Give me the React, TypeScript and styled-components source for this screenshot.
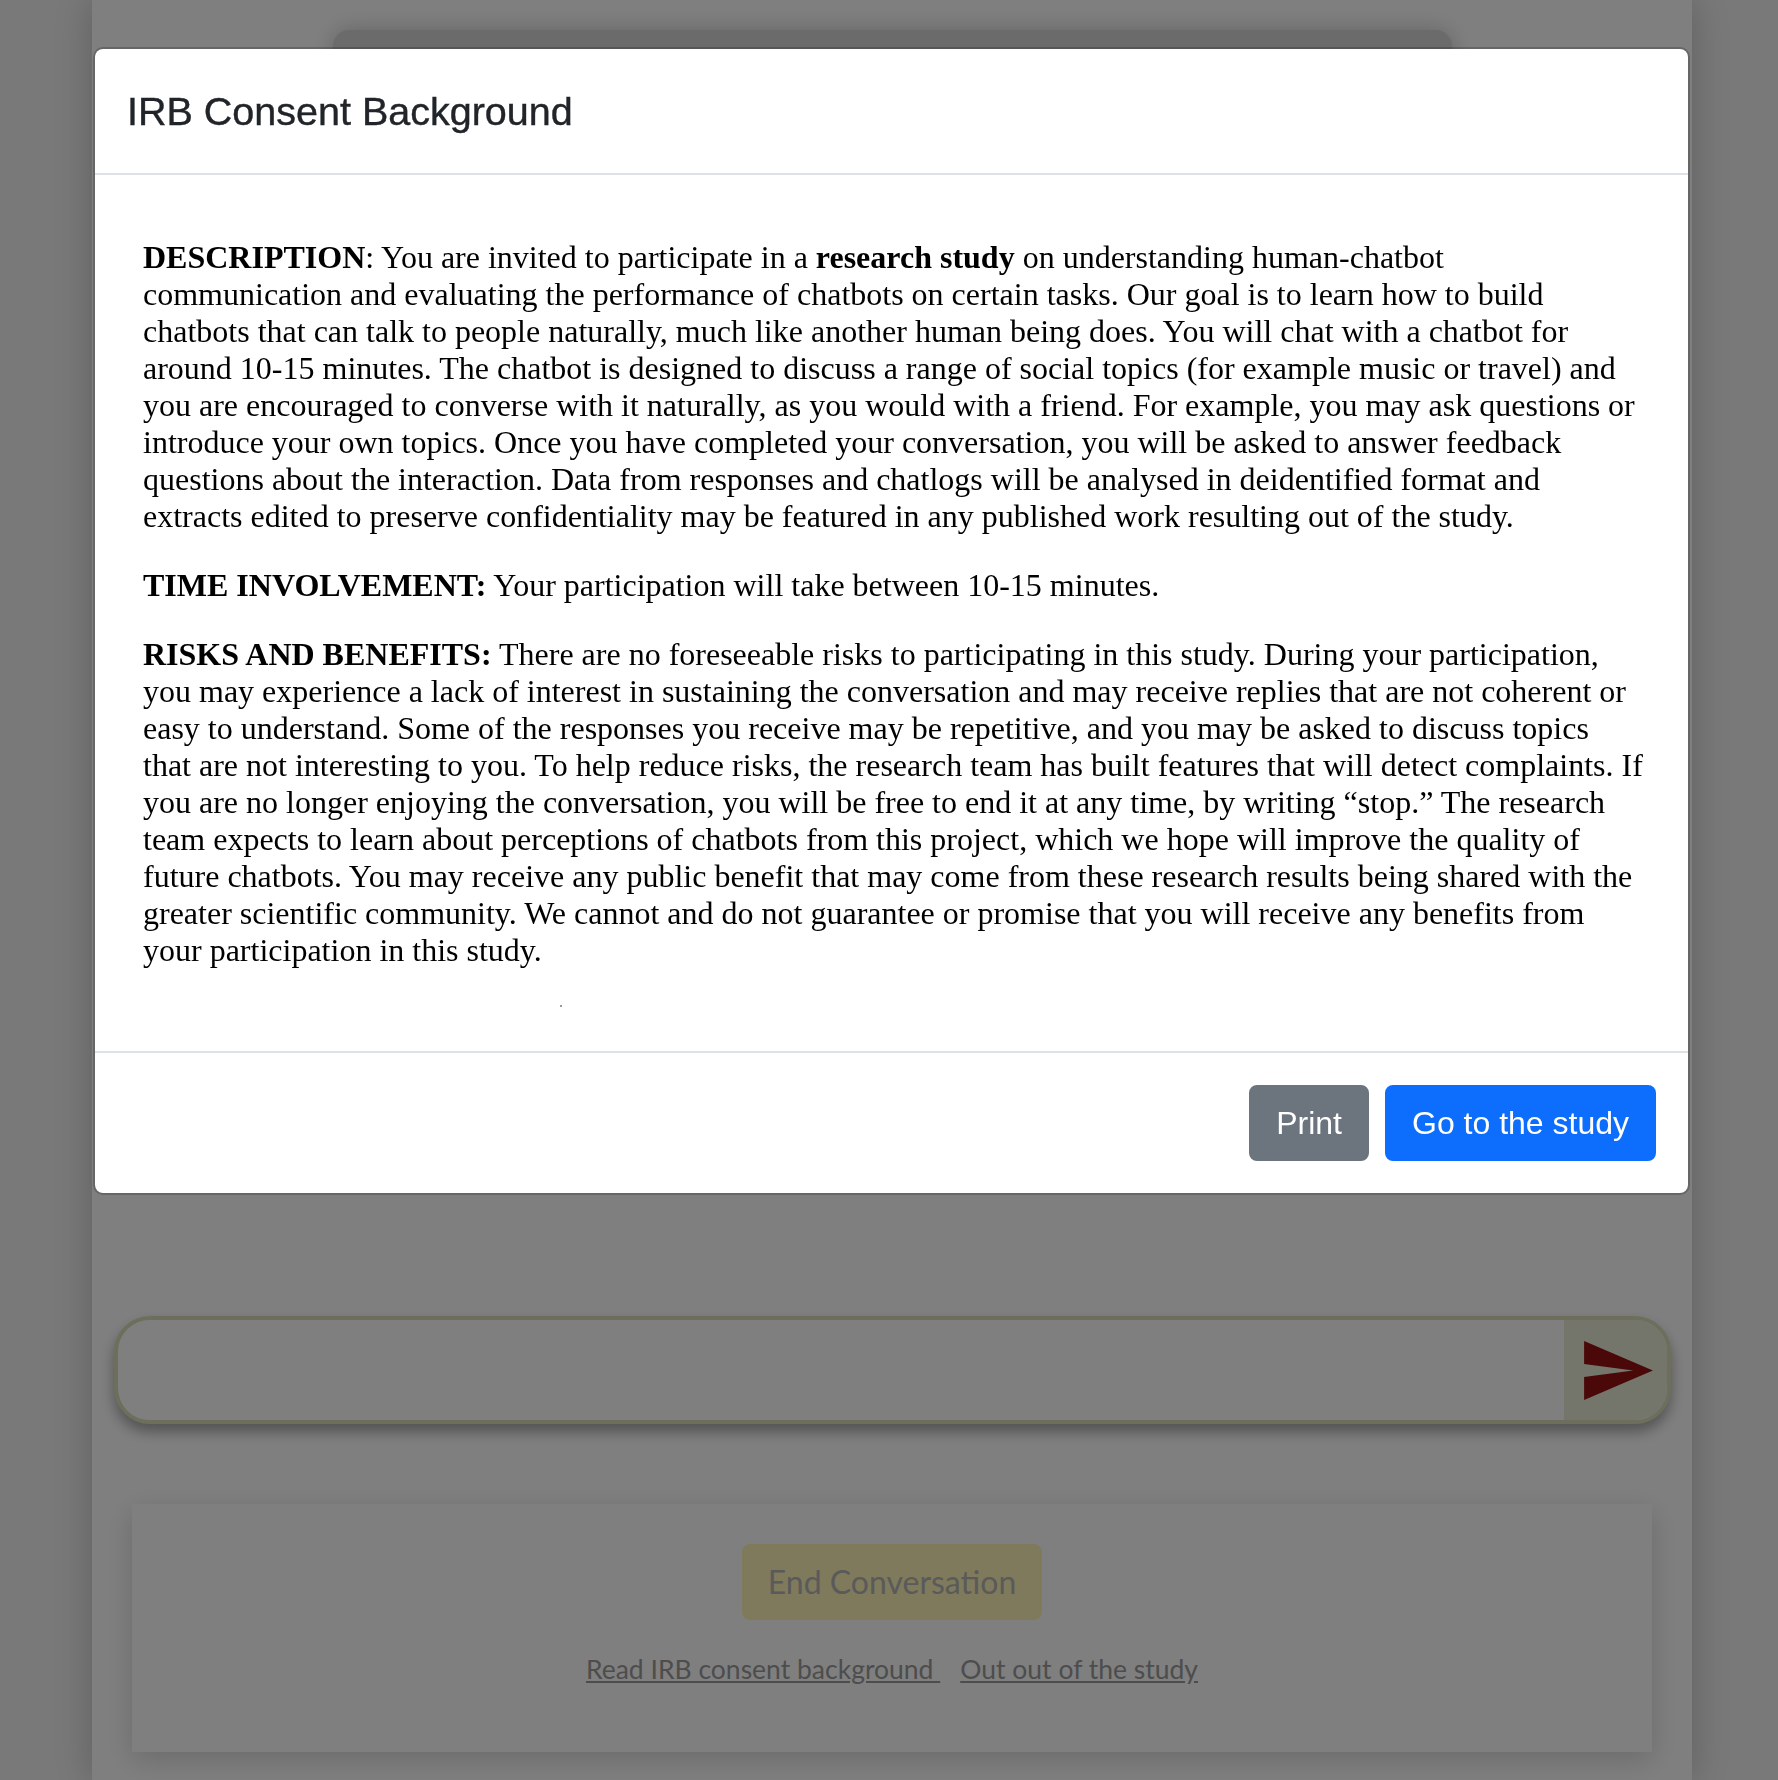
import React from "react";
import styled, { createGlobalStyle } from "styled-components";

const GlobalStyle = createGlobalStyle`
  * { box-sizing: border-box; }
  html, body { margin: 0; padding: 0; }
  body {
    background: #f2f2f2;
    overflow: hidden;
    font-family: "Lato", "Open Sans", sans-serif;
  }
`;

const Page = styled.div`
  height: 1780px;
  display: flex;
  padding-left: 92px;
`;

const Panel = styled.main`
  width: 1600px;
  height: 1780px;
  background: #ffffff;
  box-shadow: 0 0 34px rgba(0, 0, 0, 0.22);
  display: flex;
  flex-direction: column;
  align-items: center;
`;

const TopCard = styled.header`
  width: 1119px;
  height: 140px;
  margin-top: 30px;
  background: #d7d7d7;
  border-radius: 16px;
  box-shadow: 0 0 22px rgba(0, 0, 0, 0.22);
`;

const ChatLog = styled.section`
  height: 1146px;
  width: 100%;
`;

const InputBar = styled.form`
  width: 1557px;
  height: 108px;
  display: flex;
  border: 4px solid #dadfb9;
  border-radius: 36px;
  overflow: hidden;
  background: #ffffff;
  box-shadow: 0 8px 14px rgba(0, 0, 0, 0.35);
`;

const TextInput = styled.input`
  flex: 1;
  border: none;
  outline: none;
  background: transparent;
  font-family: "Lato", sans-serif;
  font-size: 32px;
  padding: 0 36px;
`;

const SendButton = styled.button`
  width: 103px;
  border: none;
  background: #e8ecd6;
  display: flex;
  align-items: center;
  padding: 0 0 0 20px;
  cursor: pointer;
`;

const ActionsCard = styled.section`
  width: 1520px;
  margin-top: 80px;
  background: #ffffff;
  box-shadow: 0 8px 26px rgba(0, 0, 0, 0.16);
  display: flex;
  flex-direction: column;
  align-items: center;
  padding: 40px 0 63px;
`;

const EndButton = styled.button`
  font-family: "Lato", sans-serif;
  font-size: 32px;
  line-height: 48px;
  padding: 12px 24px;
  border: 2px solid #fef4b8;
  border-radius: 8px;
  background: #fef4b8;
  color: #b4b4b4;
  margin-bottom: 30px;
  &:disabled {
    color: #b4b4b4;
  }
`;

const LinkRow = styled.div`
  display: flex;
  gap: 20px;
  font-family: "Lato", sans-serif;
  font-size: 26.5px;
  line-height: 39px;
`;

const FooterLink = styled.a`
  color: #9a9a9a;
  text-decoration: underline;
  white-space: pre;
`;

const Backdrop = styled.div`
  position: fixed;
  inset: 0;
  background: rgba(0, 0, 0, 0.5);
`;

const ModalLayer = styled.div`
  position: fixed;
  inset: 0;
  display: flex;
  align-items: flex-start;
  padding: 47px 0 0 93px;
`;

const Modal = styled.div`
  width: 1597px;
  background: #ffffff;
  background-clip: padding-box;
  border: 2px solid rgba(0, 0, 0, 0.2);
  border-radius: 10px;
  display: flex;
  flex-direction: column;
`;

const ModalHeader = styled.div`
  padding: 32px;
  border-bottom: 2px solid #dee2e6;
`;

const ModalTitle = styled.h5`
  margin: 0;
  font-family: "Liberation Sans", Arial, sans-serif;
  font-size: 39.5px;
  font-weight: 500;
  line-height: 60px;
  color: #212529;
  -webkit-text-stroke: 0.4px #212529;
`;

const ModalBody = styled.div`
  padding: 64px 45px 32px 48px;
  font-family: "Liberation Serif", "Times New Roman", serif;
  font-size: 32px;
  line-height: 37px;
  color: #000000;
`;

const Paragraph = styled.p`
  margin: 0 0 32px;
`;

const Strong = styled.b`
  font-weight: 700;
`;

const DotLine = styled.div`
  height: 18px;
  padding: 4px 0 0 417px;
`;

const Dot = styled.span`
  display: block;
  width: 2px;
  height: 2px;
  background: #9a9a9a;
`;

const ModalFooter = styled.div`
  display: flex;
  justify-content: flex-end;
  align-items: center;
  padding: 24px;
  border-top: 2px solid #dee2e6;
`;

const Button = styled.button<{ $variant: "secondary" | "primary" }>`
  margin: 8px;
  font-family: "Liberation Sans", Arial, sans-serif;
  font-size: 32px;
  line-height: 48px;
  padding: 12px 25px;
  border-radius: 8px;
  color: #ffffff;
  cursor: pointer;
  border: 2px solid ${(p) => (p.$variant === "primary" ? "#0d6efd" : "#6c757d")};
  background: ${(p) => (p.$variant === "primary" ? "#0d6efd" : "#6c757d")};
`;

const SendIcon = () => (
  <svg width="69" height="59" viewBox="2 3 21 18" aria-hidden="true">
    <path d="M2.01 21L23 12 2.01 3 2 10l15 2-15 2z" fill="#941111" />
  </svg>
);

export default function App() {
  return (
    <>
      <GlobalStyle />
      <Page>
        <Panel>
          <TopCard />
          <ChatLog />
          <InputBar onSubmit={(e) => e.preventDefault()}>
            <TextInput type="text" />
            <SendButton type="submit">
              <SendIcon />
            </SendButton>
          </InputBar>
          <ActionsCard>
            <EndButton disabled>End Conversation</EndButton>
            <LinkRow>
              <FooterLink href="#">Read IRB consent background </FooterLink>
              <FooterLink href="#">Out out of the study</FooterLink>
            </LinkRow>
          </ActionsCard>
        </Panel>
      </Page>
      <Backdrop />
      <ModalLayer>
        <Modal role="dialog">
          <ModalHeader>
            <ModalTitle>IRB Consent Background</ModalTitle>
          </ModalHeader>
          <ModalBody>
            <Paragraph>
              <Strong>DESCRIPTION</Strong>: You are invited to participate in a{" "}
              <Strong>research study</Strong> on understanding human-chatbot
              communication and evaluating the performance of chatbots on certain
              tasks. Our goal is to learn how to build chatbots that can talk to
              people naturally, much like another human being does. You will chat
              with a chatbot for around 10-15 minutes. The chatbot is designed to
              discuss a range of social topics (for example music or travel) and
              you are encouraged to converse with it naturally, as you would with a
              friend. For example, you may ask questions or introduce your own
              topics. Once you have completed your conversation, you will be asked
              to answer feedback questions about the interaction. Data from
              responses and chatlogs will be analysed in deidentified format and
              extracts edited to preserve confidentiality may be featured in any
              published work resulting out of the study.
            </Paragraph>
            <Paragraph>
              <Strong>TIME INVOLVEMENT:</Strong> Your participation will take
              between 10-15 minutes.
            </Paragraph>
            <Paragraph>
              <Strong>RISKS AND BENEFITS:</Strong> There are no foreseeable risks to
              participating in this study. During your participation, you may
              experience a lack of interest in sustaining the conversation and may
              receive replies that are not coherent or easy to understand. Some of
              the responses you receive may be repetitive, and you may be asked to
              discuss topics that are not interesting to you. To help reduce risks,
              the research team has built features that will detect complaints. If
              you are no longer enjoying the conversation, you will be free to end it
              at any time, by writing “stop.” The research team expects to learn
              about perceptions of chatbots from this project, which we hope will
              improve the quality of future chatbots. You may receive any public
              benefit that may come from these research results being shared with
              the greater scientific community. We cannot and do not guarantee or
              promise that you will receive any benefits from your participation in
              this study.
            </Paragraph>
            <DotLine>
              <Dot />
            </DotLine>
          </ModalBody>
          <ModalFooter>
            <Button $variant="secondary">Print</Button>
            <Button $variant="primary">Go to the study</Button>
          </ModalFooter>
        </Modal>
      </ModalLayer>
    </>
  );
}
